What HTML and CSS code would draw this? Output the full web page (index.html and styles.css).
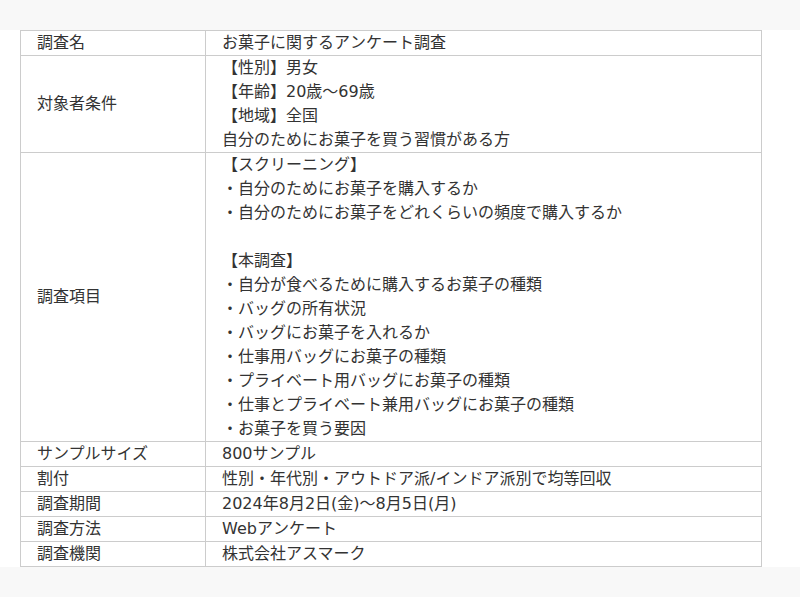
FILE: index.html
```html
<!DOCTYPE html>
<html lang="ja">
<head>
<meta charset="utf-8">
<title>調査概要</title>
<link rel="stylesheet" href="styles.css">
</head>
<body>
<div class="band"></div>
<section class="panel">
  <table class="spec">
    <tbody>
      <tr><th>調査名</th><td>お菓子に関するアンケート調査</td></tr>
      <tr><th>対象者条件</th><td>【性別】男女<br>【年齢】20歳〜69歳<br>【地域】全国<br>自分のためにお菓子を買う習慣がある方</td></tr>
      <tr><th>調査項目</th><td>【スクリーニング】<br>・自分のためにお菓子を購入するか<br>・自分のためにお菓子をどれくらいの頻度で購入するか<br><br>【本調査】<br>・自分が食べるために購入するお菓子の種類<br>・バッグの所有状況<br>・バッグにお菓子を入れるか<br>・仕事用バッグにお菓子の種類<br>・プライベート用バッグにお菓子の種類<br>・仕事とプライベート兼用バッグにお菓子の種類<br>・お菓子を買う要因</td></tr>
      <tr><th>サンプルサイズ</th><td>800サンプル</td></tr>
      <tr><th>割付</th><td>性別・年代別・アウトドア派/インドア派別で均等回収</td></tr>
      <tr><th>調査期間</th><td>2024年8月2日(金)〜8月5日(月)</td></tr>
      <tr><th>調査方法</th><td>Webアンケート</td></tr>
      <tr><th>調査機関</th><td>株式会社アスマーク</td></tr>
    </tbody>
  </table>
</section>
<div class="band"></div>
</body>
</html>
```
FILE: styles.css
```css
html, body {
  margin: 0;
  padding: 0;
  background: #f8f8f8;
}
body {
  font-family: "DejaVu Sans", "Noto Sans CJK JP", sans-serif;
  font-size: 16px;
  line-height: 24px;
  color: #333;
  text-spacing-trim: space-all;
}
.band {
  height: 30px;
}
.panel {
  background: #fff;
  padding: 0 38px 0 20px;
}
.spec {
  width: 742px;
  border-collapse: collapse;
  border: 1px solid #ccc;
}
.spec th,
.spec td {
  border: 1px solid #ccc;
  padding: 0 16px;
  text-align: left;
  vertical-align: middle;
  font-weight: normal;
}
.spec th {
  width: 152px;
}
```
